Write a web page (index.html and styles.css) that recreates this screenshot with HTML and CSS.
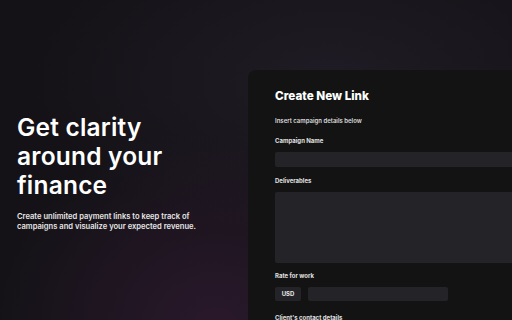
FILE: index.html
```html
<!DOCTYPE html>
<html>
<head>
<meta charset="utf-8">
<link rel="stylesheet" href="styles.css">
</head>
<body>
<div class="page">
  <section class="intro">
    <h1 class="headline">Get clarity<br>around your<br>finance</h1>
    <p class="lead">Create unlimited payment links to keep track of<br>campaigns and visualize your expected revenue.</p>
  </section>
  <section class="card">
    <h2 class="card-title">Create New Link</h2>
    <p class="hint">Insert campaign details below</p>
    <div class="field first">
      <label class="label">Campaign Name</label>
      <div class="input"></div>
    </div>
    <div class="field">
      <label class="label">Deliverables</label>
      <div class="input textarea"></div>
    </div>
    <div class="field rate-field">
      <label class="label">Rate for work</label>
      <div class="rate">
        <div class="currency">USD</div>
        <div class="input amount"></div>
      </div>
    </div>
    <div class="field last">
      <label class="label">Client's contact details</label>
    </div>
  </section>
</div>
</body>
</html>
```
FILE: styles.css
```css
html, body {
  margin: 0;
  padding: 0;
  width: 512px;
  height: 320px;
  overflow: hidden;
  background: #141216;
}
.page {
  width: 512px;
  height: 320px;
  display: flex;
  font-family: Inter, "Liberation Sans", sans-serif;
  color: #f2f2f2;
  background:
    radial-gradient(ellipse 220px 200px at 215px 330px, rgba(60, 30, 60, 0.55), rgba(40, 25, 45, 0) 100%),
    radial-gradient(ellipse 300px 160px at 330px 80px, rgba(40, 34, 46, 0.6), rgba(30, 28, 36, 0) 100%),
    #141217;
}
.intro {
  width: 248px;
  flex: none;
  box-sizing: border-box;
  padding: 113px 0 0 17px;
}
.headline {
  margin: 0;
  font-size: 24.5px;
  line-height: 29px;
  font-weight: 600;
  letter-spacing: 0.2px;
  color: #ffffff;
}
.lead {
  margin: 12px 0 0;
  font-size: 7.6px;
  line-height: 10px;
  font-weight: 600;
  color: #e6e6e6;
}
.card {
  flex: 1;
  margin-top: 70px;
  background: #131313;
  border-top-left-radius: 8px;
  padding: 18px 0 0 27px;
  box-sizing: border-box;
}
.card-title {
  margin: 0;
  font-size: 11.7px;
  line-height: 16px;
  font-weight: 800;
  color: #ffffff;
}
.hint {
  margin: 11.5px 0 0;
  font-size: 6px;
  line-height: 9px;
  font-weight: 600;
  color: #dddddd;
}
.field {
  margin-top: 8.5px;
}
.field.first {
  margin-top: 11px;
}
.field.rate-field {
  margin-top: 7.5px;
}
.field.last {
  margin-top: 11.5px;
}
.label {
  display: block;
  font-size: 6px;
  line-height: 9px;
  font-weight: 700;
  color: #e0e0e0;
}
.input {
  margin-top: 7.5px;
  height: 15px;
  background: #242328;
  border-radius: 2px 0 0 2px;
}
.textarea {
  height: 71px;
}
.rate {
  display: flex;
  gap: 7px;
  margin-top: 7.5px;
}
.currency {
  width: 26px;
  height: 14px;
  background: #242328;
  border-radius: 2px;
  font-size: 6px;
  line-height: 14px;
  font-weight: 700;
  text-align: center;
  color: #e8e8e8;
}
.amount {
  margin-top: 0;
  width: 140px;
  height: 14px;
  border-radius: 2px;
}
```
